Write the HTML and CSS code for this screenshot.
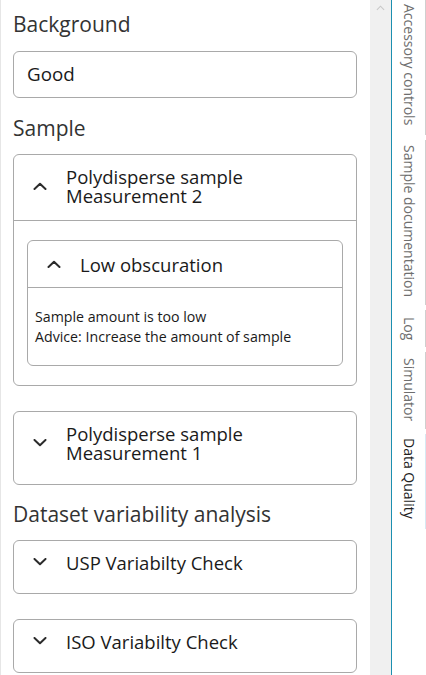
FILE: index.html
```html
<!DOCTYPE html>
<html>
<head>
<meta charset="utf-8">
<link rel="stylesheet" href="styles.css">
</head>
<body>
<div class="app">
  <main class="panel">
    <h2 class="heading h-first">Background</h2>
    <div class="field">Good</div>
    <h2 class="heading h-mid">Sample</h2>

    <section class="card card-open">
      <div class="card-head head-tall">
        <svg class="chev" viewBox="0 0 14 8"><polyline points="1.5,7 7,1.8 12.5,7"/></svg>
        <div class="title"><span class="line">Polydisperse sample</span><span class="line">Measurement 2</span></div>
      </div>
      <div class="card-body">
        <section class="card inner">
          <div class="card-head head-inner">
            <svg class="chev" viewBox="0 0 14 8"><polyline points="1.5,7 7,1.8 12.5,7"/></svg>
            <div class="title">Low obscuration</div>
          </div>
          <div class="inner-body">
            <p>Sample amount is too low</p>
            <p>Advice: Increase the amount of sample</p>
          </div>
        </section>
      </div>
    </section>

    <section class="card card-gap">
      <div class="card-head head-closed2">
        <svg class="chev" viewBox="0 0 14 8"><polyline points="1.5,1 7,6.2 12.5,1"/></svg>
        <div class="title"><span class="line">Polydisperse sample</span><span class="line">Measurement 1</span></div>
      </div>
    </section>

    <h2 class="heading h-last">Dataset variability analysis</h2>

    <section class="card card-first">
      <div class="card-head head-closed">
        <svg class="chev" viewBox="0 0 14 8"><polyline points="1.5,1 7,6.2 12.5,1"/></svg>
        <div class="title">USP Variabilty Check</div>
      </div>
    </section>

    <section class="card card-gap">
      <div class="card-head head-closed">
        <svg class="chev" viewBox="0 0 14 8"><polyline points="1.5,1 7,6.2 12.5,1"/></svg>
        <div class="title">ISO Variabilty Check</div>
      </div>
    </section>
  </main>

  <div class="scrollbar">
    <svg class="scroll-up" viewBox="0 0 10 6"><polyline points="1,5 5,1 9,5"/></svg>
  </div>

  <nav class="tabs">
    <div class="tab t1"><span>Accessory controls</span></div>
    <div class="tab t2"><span>Sample documentation</span></div>
    <div class="tab t3"><span>Log</span></div>
    <div class="tab t4"><span>Simulator</span></div>
    <div class="tab t5 active"><span>Data Quality</span></div>
  </nav>
</div>
</body>
</html>
```

FILE: styles.css
```css
* { box-sizing: border-box; }

html, body {
  margin: 0;
  padding: 0;
  background: #ffffff;
  font-family: "Open Sans", "Noto Sans", "Liberation Sans", sans-serif;
}

.app {
  display: flex;
  width: 426px;
  height: 675px;
  overflow: hidden;
}

.panel {
  width: 370px;
  flex: none;
  border-left: 1px solid #e6e6e6;
  padding: 0 13px 0 12px;
  overflow: hidden;
}

.heading {
  margin: 0;
  font-size: 21px;
  line-height: 26px;
  font-weight: 400;
  color: #333333;
}
.h-first { margin-top: 11px; }
.h-mid { margin-top: 17px; }
.h-last { margin-top: 16px; }

.field {
  margin-top: 14px;
  height: 47px;
  border: 1px solid #a9a9a9;
  border-radius: 6px;
  padding-left: 13px;
  padding-bottom: 2px;
  display: flex;
  align-items: center;
  font-size: 18.8px;
  color: #1a1a1a;
}

.card {
  border: 1px solid #a9a9a9;
  border-radius: 6px;
  background: #fff;
}
.card-open { margin-top: 13px; }
.card-gap { margin-top: 25px; }
.card-first { margin-top: 13px; }

.card-head {
  display: flex;
  align-items: center;
  padding-left: 19px;
  color: #1a1a1a;
}
.head-tall { height: 66px; padding-bottom: 4px; border-bottom: 1px solid #a9a9a9; }
.head-closed2 { height: 72px; padding-bottom: 10px; }
.head-closed { height: 52px; padding-bottom: 10px; }
.head-inner { height: 47px; border-bottom: 1px solid #a9a9a9; }

.chev {
  width: 14px;
  height: 8px;
  flex: none;
  fill: none;
  stroke: #2b2b2b;
  stroke-width: 2;
  stroke-linecap: round;
  stroke-linejoin: round;
}

.title {
  margin-left: 19px;
  font-size: 18.5px;
  line-height: 19px;
}
.title .line { display: block; }

.card-body {
  padding: 19px 13px 19px 13px;
}

.inner-body {
  padding: 19px 8px 18px 7px;
  font-size: 14.2px;
  line-height: 20px;
  color: #1a1a1a;
}
.inner-body p { margin: 0; }

.scrollbar {
  width: 21px;
  flex: none;
  background: #f0f0f0;
  display: flex;
  justify-content: center;
  align-items: flex-start;
  padding-top: 5px;
}
.scroll-up {
  width: 9px;
  height: 6px;
  fill: none;
  stroke: #c8c8c8;
  stroke-width: 1.2;
}

.tabs {
  flex: none;
  width: 35px;
  border-left: 1px solid #1c8fb0;
  display: flex;
  flex-direction: column;
  gap: 5px;
}
.tab {
  border-right: 1px solid #cfcfcf;
  display: flex;
  justify-content: center;
  padding-left: 1px;
}
.tab span {
  writing-mode: vertical-rl;
  font-size: 14px;
  line-height: 16px;
  color: #6e6e6e;
}
.tab.active { border-right-color: #d6e9f3; }
.tab.active span { color: #1f1f1f; }
.t1 { height: 135px; padding-top: 4px; }
.t2 { height: 165px; padding-top: 5px; }
.t3 { height: 37px; padding-top: 7px; }
.t4 { height: 77px; padding-top: 6px; }
.t5 { height: 95px; padding-top: 4px; }
```
